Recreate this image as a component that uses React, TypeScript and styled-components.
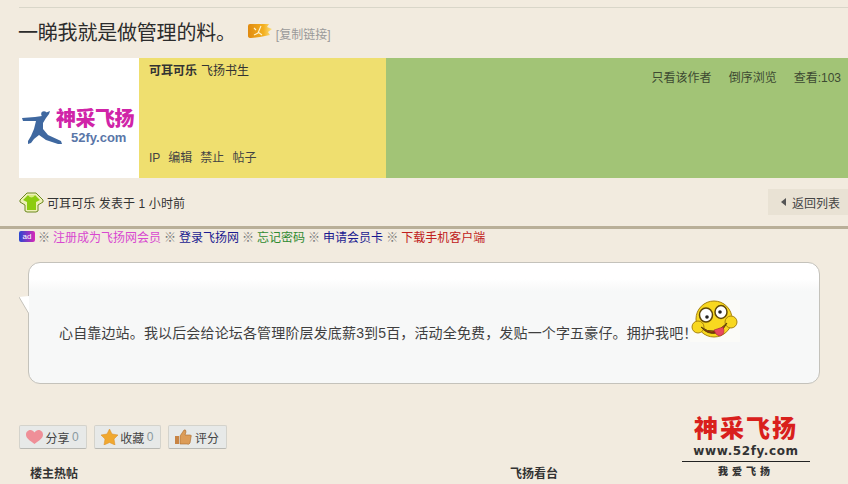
import styled, { createGlobalStyle } from 'styled-components';

const sans = `"Liberation Sans", "Noto Sans CJK SC", sans-serif`;

const GlobalStyle = createGlobalStyle`
	html, body {
		margin: 0;
		padding: 0;
		background: #f2ebdf;
		font-family: ${sans};
		font-size: 12px;
		color: #333;
	}
`;

const Page = styled.div`
	position: relative;
	width: 848px;
	height: 484px;
	overflow: hidden;
	padding-top: 7px;
	box-sizing: border-box;
`;

const TopRule = styled.div`
	height: 1px;
	background: #d9d6c9;
	margin-left: 19px;
`;

const TitleRow = styled.div`
	display: flex;
	align-items: center;
	height: 50px;
	padding: 0 0 3px 18px;
	box-sizing: border-box;
`;

const Title = styled.h1`
	margin: 0;
	font-size: 20px;
	font-weight: 400;
	color: #2c2c2c;
	letter-spacing: -0.2px;
`;

const CopyLink = styled.span`
	margin-left: 4px;
	padding-top: 3px;
	font-size: 12px;
	color: #9a9a9a;
`;

const InfoRow = styled.div`
	display: flex;
	height: 120px;
	margin-left: 19px;
`;

const Avatar = styled.div`
	width: 120px;
	background: #fff;
	display: flex;
	justify-content: center;
	padding-top: 50px;
	box-sizing: border-box;
`;

const AuthorPanel = styled.div`
	width: 247px;
	background: #efdf6f;
	padding: 6px 10px 13px;
	box-sizing: border-box;
	display: flex;
	flex-direction: column;
	justify-content: space-between;
	line-height: 14px;
`;

const AuthorName = styled.div`
	display: flex;
	gap: 4px;
	color: #333;
`;

const Bold = styled.b`
	font-weight: 700;
`;

const Actions = styled.div`
	display: flex;
	gap: 8px;
	color: #444;
`;

const StatsPanel = styled.div`
	flex: 1;
	background: #a2c476;
	display: flex;
	justify-content: flex-end;
	gap: 17px;
	padding: 13px 7px 0 0;
	line-height: 14px;
	color: #3d4a32;
`;

const PostLine = styled.div`
	display: flex;
	align-items: center;
	justify-content: space-between;
	height: 48px;
	border-bottom: 3px solid #b9af98;
	box-sizing: content-box;
	padding-left: 19px;
`;

const Poster = styled.div`
	display: flex;
	align-items: center;
	gap: 3px;
	padding-top: 1px;
	letter-spacing: 0.1px;
`;

const BackButton = styled.div`
	display: flex;
	align-items: center;
	gap: 6px;
	width: 80px;
	height: 26px;
	padding-left: 13px;
	box-sizing: border-box;
	background: #e9e2d4;
	color: #444;
`;

const BackArrow = styled.i`
	width: 0;
	height: 0;
	border: 4px solid transparent;
	border-left: 0;
	border-right: 5px solid #555;
`;

const NoticeRow = styled.div`
	display: flex;
	align-items: center;
	gap: 3px;
	height: 15px;
	padding-left: 19px;
	color: #777;
`;

const AdBadge = styled.span`
	width: 16px;
	height: 11px;
	border-radius: 2px;
	background: linear-gradient(90deg, #2a48d0, #d828b8);
	color: #fff;
	font-size: 8px;
	line-height: 11px;
	text-align: center;
`;

const NoticeLink = styled.span<{ $color: string }>`
	color: ${(p) => p.$color};
`;

const BubbleWrap = styled.div`
	position: relative;
	margin: 18px 28px 0;
`;

const Bubble = styled.div`
	height: 122px;
	box-sizing: border-box;
	border: 1px solid #c4c2bb;
	border-radius: 12px;
	background: linear-gradient(#fff 0, #fff 16px, #f7f8f8 28px);
	padding: 61px 0 0 30px;
	display: flex;
	font-size: 14px;
	line-height: 18px;
	letter-spacing: 0.15px;
	color: #3f3f3f;
`;

const BubbleTail = styled.svg`
	position: absolute;
	left: -9px;
	top: 34px;
`;

const Smiley = styled.svg`
	position: absolute;
	left: 662px;
	top: 38px;
`;

const ShareRow = styled.div`
	display: flex;
	gap: 7px;
	margin: 41px 0 0 19px;
`;

const ShareButton = styled.div`
	display: flex;
	align-items: center;
	gap: 2.5px;
	height: 24px;
	padding: 0 7px 0 6px;
	box-sizing: border-box;
	background: #e7e9e8;
	border: 1px solid #d4d3cc;
	border-bottom-color: #b9b9b4;
	border-radius: 2px;
	color: #444;
`;

const Count = styled.span`
	color: #8a9aa0;
`;

const BottomRow = styled.div`
	display: flex;
	margin: 17px 0 0 30px;
	font-weight: 700;
	line-height: 16px;
	color: #333;
`;

const BottomLeft = styled.div`
	width: 480px;
`;

const Watermark = styled.div`
	position: absolute;
	left: 682px;
	top: 415px;
	width: 128px;
	display: flex;
	flex-direction: column;
	align-items: center;
`;

const MarkTitle = styled.div`
	font-size: 24px;
	font-weight: 900;
	line-height: 28px;
	letter-spacing: 2px;
	color: #d9201c;
`;

const MarkUrl = styled.div`
	font-family: "DejaVu Sans", sans-serif;
	font-size: 12px;
	font-weight: 700;
	letter-spacing: 0.6px;
	line-height: 16px;
	color: #333;
	width: 100%;
	text-align: center;
	padding-bottom: 2px;
	border-bottom: 1px solid #222;
`;

const MarkSub = styled.div`
	font-size: 10px;
	font-weight: 900;
	letter-spacing: 4px;
	line-height: 16px;
	margin-top: 2px;
	color: #333;
`;

const LogoWrap = styled.div`
	position: relative;
	width: 112px;
	height: 44px;
`;

const LogoName = styled.div`
	position: absolute;
	left: 33px;
	top: 0;
	font-size: 20px;
	font-weight: 900;
	line-height: 22px;
	white-space: nowrap;
	letter-spacing: -0.5px;
	color: #d024a8;
`;

const LogoUrl = styled.div`
	position: absolute;
	left: 48px;
	top: 23px;
	font-size: 13px;
	font-weight: 700;
	line-height: 14px;
	color: #5a76a8;
`;

const RunnerIcon = styled.svg`
	position: absolute;
	left: -1px;
	top: 2px;
`;

const Runner = () => (
	<RunnerIcon width="42" height="36" viewBox="0 0 42 36">
		<path
			d="M0 8 L13 7 L20 6 L23 3 L28 1 L27 4 L24 8 L21 13 L21 19 L26 25 L39 31 L40 34 L36 34 L24 30 L17 25 L12 29 L9 33 L6 34 L6 31 L9 26 L12 19 L14 11 L8 11 L1 11 Z"
			fill="#3f68a0"
		/>
		<circle cx="22" cy="4" r="2.800" fill="#3f68a0" />
	</RunnerIcon>
);

const FlameIcon = styled.svg`
	margin-left: 12px;
`;

const AdFlame = () => (
	<FlameIcon width="24" height="15" viewBox="0 0 24 15">
		<defs>
			<linearGradient id="flame" x1="0" x2="1" y1="0" y2="0">
				<stop offset="0" stopColor="#e08a10" />
				<stop offset="0.65" stopColor="#f4b020" />
				<stop offset="1" stopColor="#fbe080" />
			</linearGradient>
		</defs>
		<path d="M2 0 H21 L19 3 L24 5 L20 8 L22 11 L12 13 L3 14 Q0 14 0 12 V2 Q0 0 2 0 Z" fill="url(#flame)" />
		<path d="M6 4 L8 6 M13 2 L10 9 L6 11 M10 8 L14 11" stroke="#fff3d0" strokeWidth="1.100" fill="none" />
	</FlameIcon>
);

const Shirt = () => (
	<svg width="25" height="21" viewBox="0 0 25 21">
		<path d="M8 1 L17 1 L24 8 L24 10 L19 13 L19 19 L17 20 L8 20 L6 19 L6 13 L1 10 L1 8 Z" fill="#eef0b8" stroke="#6c8a20" strokeWidth="1" />
		<path d="M9 3 Q12.500 6 16 3 L21 8 L17 10 L17 18 L8 18 L8 10 L4 8 Z" fill="#8ccc10" />
		<path d="M9 3 Q12.500 8 16 3" fill="#d8ec80" />
	</svg>
);

const Heart = () => (
	<svg width="17" height="14" viewBox="0 0 17 14">
		<path d="M8.500 14 C3 10 0 8 0 4.500 C0 1.500 2.500 0 4.500 0 C6 0 7.500 1 8.500 2.500 C9.500 1 11 0 12.500 0 C14.500 0 17 1.500 17 4.500 C17 8 14 10 8.500 14 Z" fill="#ef8f98" />
	</svg>
);

const Star = () => (
	<svg width="17" height="16" viewBox="0 0 17 16">
		<path d="M8.500 0 L11 5 L17 6 L13 10 L14 16 L8.500 13.500 L3 16 L4 10 L0 6 L6 5 Z" fill="#f0a830" stroke="#d88a20" strokeWidth="0.500" />
	</svg>
);

const Thumb = () => (
	<svg width="17" height="16" viewBox="0 0 17 16">
		<path d="M5 7 L9 1 Q11 0 11 3 L10 6 H15 Q17 6 16 8 L15 14 Q14 16 12 15 H5 Z" fill="#dc9c58" stroke="#a86c30" strokeWidth="0.600" />
		<rect x="0" y="7" width="4" height="8" fill="#c88444" />
	</svg>
);

const Face = () => (
	<Smiley width="50" height="42" viewBox="0 0 50 42">
		<rect width="50" height="42" fill="#fbfbf8" />
		<circle cx="24" cy="19" r="18" fill="#f8d820" stroke="#a88410" strokeWidth="1" />
		<ellipse cx="8" cy="27" rx="6" ry="6" fill="#f8d820" stroke="#a88410" />
		<ellipse cx="41" cy="22" rx="6" ry="6" fill="#f8d820" stroke="#a88410" />
		<ellipse cx="16" cy="15" rx="6.500" ry="7" fill="#fff" stroke="#604808" strokeWidth="1.500" />
		<ellipse cx="31" cy="12" rx="6" ry="6.500" fill="#fff" stroke="#604808" strokeWidth="1.500" />
		<circle cx="17" cy="17" r="1.800" fill="#222" />
		<circle cx="30" cy="12" r="1.800" fill="#222" />
		<path d="M11 27 Q24 37 37 23 Q34 30 27 33 Q17 35 11 27 Z" fill="#8a3008" stroke="#604808" />
		<path d="M24 30 L33 27 Q36 34 30 36 Q26 36 24 30 Z" fill="#e84860" stroke="#a82838" strokeWidth="0.600" />
	</Smiley>
);

export default function App() {
	return (
		<Page>
			<GlobalStyle />
			<TopRule />
			<TitleRow>
				<Title>一睇我就是做管理的料。</Title>
				<AdFlame />
				<CopyLink>[复制链接]</CopyLink>
			</TitleRow>
			<InfoRow>
				<Avatar>
					<LogoWrap>
						<Runner />
						<LogoName>神采飞扬</LogoName>
						<LogoUrl>52fy.com</LogoUrl>
					</LogoWrap>
				</Avatar>
				<AuthorPanel>
					<AuthorName>
						<Bold>可耳可乐</Bold>
						<span>飞扬书生</span>
					</AuthorName>
					<Actions>
						<span>IP</span>
						<span>编辑</span>
						<span>禁止</span>
						<span>帖子</span>
					</Actions>
				</AuthorPanel>
				<StatsPanel>
					<span>只看该作者</span>
					<span>倒序浏览</span>
					<span>查看:103</span>
				</StatsPanel>
			</InfoRow>
			<PostLine>
				<Poster>
					<Shirt />
					<span>可耳可乐 发表于 1 小时前</span>
				</Poster>
				<BackButton>
					<BackArrow />
					<span>返回列表</span>
				</BackButton>
			</PostLine>
			<NoticeRow>
				<AdBadge>ad</AdBadge>
				<span>※</span>
				<NoticeLink $color="#d848d0">注册成为飞扬网会员</NoticeLink>
				<span>※</span>
				<NoticeLink $color="#1a1a90">登录飞扬网</NoticeLink>
				<span>※</span>
				<NoticeLink $color="#2f8a2f">忘记密码</NoticeLink>
				<span>※</span>
				<NoticeLink $color="#1a1a90">申请会员卡</NoticeLink>
				<span>※</span>
				<NoticeLink $color="#c02020">下载手机客户端</NoticeLink>
			</NoticeRow>
			<BubbleWrap>
				<Bubble>心自靠边站。我以后会给论坛各管理阶层发底薪3到5百，活动全免费，发贴一个字五豪仔。拥护我吧！</Bubble>
				<BubbleTail width="10" height="18" viewBox="0 0 10 18">
					<path d="M10 0 V18 L0 1 Z" fill="#fff" />
					<path d="M0 1 L10 18" stroke="#c4c2bb" fill="none" />
				</BubbleTail>
				<Face />
			</BubbleWrap>
			<ShareRow>
				<ShareButton>
					<Heart />
					<span>分享</span>
					<Count>0</Count>
				</ShareButton>
				<ShareButton>
					<Star />
					<span>收藏</span>
					<Count>0</Count>
				</ShareButton>
				<ShareButton>
					<Thumb />
					<span>评分</span>
				</ShareButton>
			</ShareRow>
			<BottomRow>
				<BottomLeft>楼主热帖</BottomLeft>
				<div>飞扬看台</div>
			</BottomRow>
			<Watermark>
				<MarkTitle>神采飞扬</MarkTitle>
				<MarkUrl>www.52fy.com</MarkUrl>
				<MarkSub>我爱飞扬</MarkSub>
			</Watermark>
		</Page>
	);
}
